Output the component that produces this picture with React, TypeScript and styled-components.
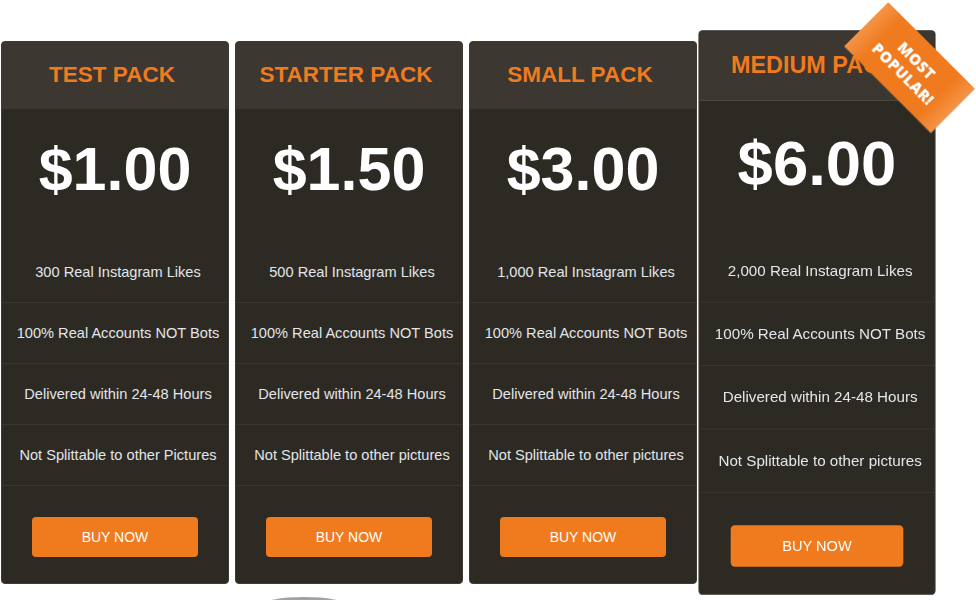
import React from "react";
import styled, { createGlobalStyle } from "styled-components";

const Global = createGlobalStyle`
  html, body { margin: 0; padding: 0; background: #ffffff; }
  body { font-family: "Liberation Sans", Arial, sans-serif; }
`;

const Page = styled.div`
  width: 976px;
  height: 600px;
  overflow: hidden;
`;

const Row = styled.div`
  display: flex;
  gap: 6px;
  padding: 41px 0 0 1px;
  align-items: flex-start;
`;

const Card = styled.div<{ $featured?: boolean }>`
  position: relative;
  width: 228px;
  height: 543px;
  box-sizing: border-box;
  display: flex;
  flex-direction: column;
  background: #2d2a24;
  border: 1px solid #3e3a34;
  border-radius: 4px;
  transform: ${(p) => (p.$featured ? "scale(1.04)" : "none")};
  transform-origin: center center;
  z-index: ${(p) => (p.$featured ? 2 : 1)};
`;

const Header = styled.div<{ $featured?: boolean }>`
  height: 66px;
  display: flex;
  align-items: center;
  justify-content: center;
  padding-right: 6px;
  background: #3c3730;
  border-radius: 3px 3px 0 0;
  border-bottom: 1px solid ${(p) => (p.$featured ? "#5b564e" : "#3c3730")};
  overflow: hidden;
`;

const Title = styled.h2`
  margin: 0;
  font-size: 22.5px;
  font-weight: 700;
  color: #f07a1e;
  white-space: nowrap;
`;

const PriceBox = styled.div`
  height: 132px;
  box-sizing: border-box;
  padding-top: 27px;
  text-align: center;
`;

const Price = styled.div`
  font-size: 61px;
  font-weight: 700;
  color: #ffffff;
  line-height: 67px;
`;

const Feature = styled.div<{ $first?: boolean }>`
  height: 61px;
  box-sizing: border-box;
  display: flex;
  align-items: center;
  justify-content: center;
  padding-left: 6px;
  border-top: ${(p) => (p.$first ? "none" : "1px solid #3a3630")};
  font-size: 14.6px;
  color: #e2e5ea;
  white-space: nowrap;
`;

const ButtonArea = styled.div`
  flex: 1;
  border-top: 1px solid #3a3630;
  display: flex;
  justify-content: center;
  padding-top: 31px;
`;

const BuyButton = styled.button`
  width: 166px;
  height: 40px;
  border: none;
  border-radius: 4px;
  background: #f07a1e;
  color: #ffffff;
  font-family: "Liberation Sans", Arial, sans-serif;
  font-size: 14px;
  text-transform: uppercase;
  cursor: pointer;
`;

const Ribbon = styled.div`
  position: absolute;
  left: 143px;
  top: 5px;
  width: 118px;
  height: 60px;
  transform: rotate(45deg);
  background: linear-gradient(
    90deg,
    #f39447 0%,
    #f07a1e 18%,
    #f07a1e 82%,
    #f39447 100%
  );
  display: flex;
  flex-direction: column;
  align-items: center;
  justify-content: center;
  color: #ffffff;
  font-family: "Open Sans", "Liberation Sans", sans-serif;
  font-weight: 800;
  font-size: 14.5px;
  line-height: 18px;
  letter-spacing: 0.4px;
  text-transform: uppercase;
  z-index: 3;
`;

const FooterHint = styled.div`
  margin: 13px 0 0 262px;
  width: 84px;
  height: 8px;
  border-radius: 50% 50% 0 0 / 100% 100% 0 0;
  background: linear-gradient(90deg, rgba(140,140,140,0), #8a8a8a 20%, #8a8a8a 80%, rgba(140,140,140,0));
  opacity: 0.8;
`;

type Plan = {
  title: string;
  price: string;
  features: string[];
  featured?: boolean;
};

const plans: Plan[] = [
  {
    title: "TEST PACK",
    price: "$1.00",
    features: [
      "300 Real Instagram Likes",
      "100% Real Accounts NOT Bots",
      "Delivered within 24-48 Hours",
      "Not Splittable to other Pictures",
    ],
  },
  {
    title: "STARTER PACK",
    price: "$1.50",
    features: [
      "500 Real Instagram Likes",
      "100% Real Accounts NOT Bots",
      "Delivered within 24-48 Hours",
      "Not Splittable to other pictures",
    ],
  },
  {
    title: "SMALL PACK",
    price: "$3.00",
    features: [
      "1,000 Real Instagram Likes",
      "100% Real Accounts NOT Bots",
      "Delivered within 24-48 Hours",
      "Not Splittable to other pictures",
    ],
  },
  {
    title: "MEDIUM PACK",
    price: "$6.00",
    featured: true,
    features: [
      "2,000 Real Instagram Likes",
      "100% Real Accounts NOT Bots",
      "Delivered within 24-48 Hours",
      "Not Splittable to other pictures",
    ],
  },
];

export default function App() {
  return (
    <Page>
      <Global />
      <Row>
        {plans.map((p) => (
          <Card key={p.title} $featured={p.featured}>
            <Header $featured={p.featured}>
              <Title>{p.title}</Title>
            </Header>
            <PriceBox>
              <Price>{p.price}</Price>
            </PriceBox>
            {p.features.map((f, i) => (
              <Feature key={f} $first={i === 0}>
                {f}
              </Feature>
            ))}
            <ButtonArea>
              <BuyButton>Buy Now</BuyButton>
            </ButtonArea>
            {p.featured && (
              <Ribbon>
                <span>Most</span>
                <span>Popular!</span>
              </Ribbon>
            )}
          </Card>
        ))}
      </Row>
      <FooterHint />
    </Page>
  );
}
